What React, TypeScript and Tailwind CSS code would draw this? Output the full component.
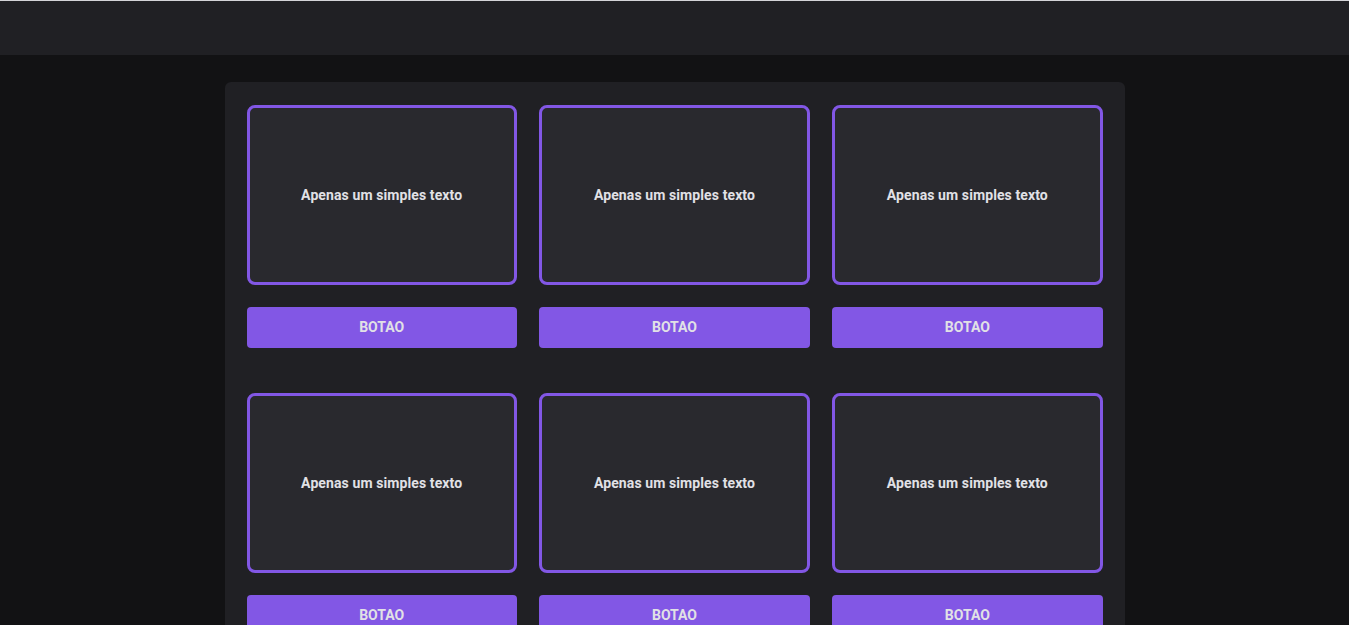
const items = [1, 2, 3, 4, 5, 6];

export default function App() {
  return (
    <div className="min-h-screen bg-[#121214] font-['Roboto',sans-serif] text-[#e1e1e6]">
      <header className="h-[55px] w-full border-t border-[#d4d4d8] bg-[#202024]" />
      <main className="mx-auto mt-[27px] w-[900px] rounded-md bg-[#202024] px-[22px] pt-[23px] pb-[45px]">
        <div className="grid grid-cols-3 gap-x-[22.5px] gap-y-[45px]">
          {items.map((i) => (
            <div key={i} className="flex flex-col">
              <div className="flex h-[180px] items-center justify-center rounded-lg border-[3px] border-[#8257e5] bg-[#29292e]">
                <p className="text-[14px] font-bold tracking-[0.1px]">Apenas um simples texto</p>
              </div>
              <button className="mt-[22px] h-[41px] rounded bg-[#8257e5] text-[14px] font-bold text-[#e1e1e6]">
                BOTAO
              </button>
            </div>
          ))}
        </div>
      </main>
    </div>
  );
}
